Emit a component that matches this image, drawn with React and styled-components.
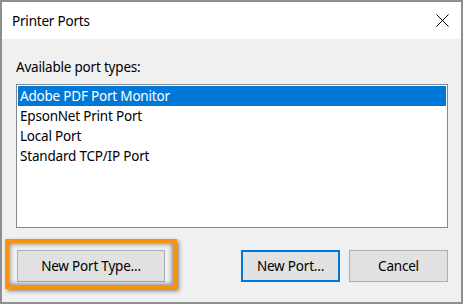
import React from 'react';
import styled, { createGlobalStyle } from 'styled-components';

const GlobalStyle = createGlobalStyle`
    html, body {
        margin: 0;
        padding: 0;
        background: #ffffff;
    }
    * {
        box-sizing: border-box;
    }
`;

const Window = styled.div`
    width: 463px;
    height: 304px;
    border: 2px solid #8e8e8e;
    display: flex;
    flex-direction: column;
    font-family: "Noto Sans", "Open Sans", sans-serif;
    font-size: 13.5px;
    letter-spacing: -0.2px;
    color: #000;
    background: #f0f0f0;
    overflow: hidden;
`;

const TitleBar = styled.div`
    height: 37px;
    flex: none;
    background: #ffffff;
    display: flex;
    align-items: center;
    justify-content: space-between;
    padding: 0 12px 0 10px;
`;

const Title = styled.span`
    line-height: 20px;
`;

const CloseButton = styled.button`
    width: 14px;
    height: 14px;
    padding: 0;
    border: none;
    background: transparent;
    display: flex;
    align-items: center;
    justify-content: center;
`;

const Body = styled.div`
    flex: 1;
    display: flex;
    flex-direction: column;
    padding: 18px 13px 0 14px;
`;

const Label = styled.div`
    line-height: 20px;
    margin-bottom: 7px;
`;

const ListBox = styled.div`
    height: 144px;
    flex: none;
    background: #ffffff;
    border: 1px solid #828790;
    padding: 1px;
`;

const ListItem = styled.div`
    height: 20px;
    line-height: 20px;
    padding-left: 2px;
    background: ${p => (p.$selected ? '#0078d7' : 'transparent')};
    color: ${p => (p.$selected ? '#ffffff' : '#000000')};
    white-space: nowrap;
`;

const ButtonRow = styled.div`
    display: flex;
    align-items: center;
    margin-top: 22px;
    gap: 9px;
`;

const Highlight = styled.div`
    position: relative;
    margin-left: 1px;
    margin-right: auto;

    &::after {
        content: '';
        position: absolute;
        top: -11px;
        left: -12px;
        right: -12px;
        bottom: -7px;
        border: 4px solid #f7930f;
        box-shadow: inset 0 0 4px 1px rgba(0, 0, 0, 0.45), 2px 2px 4px rgba(0, 0, 0, 0.45);
        pointer-events: none;
    }
`;

const Button = styled.button`
    height: 32px;
    width: ${p => p.$width || 99}px;
    font-family: inherit;
    font-size: inherit;
    letter-spacing: inherit;
    color: #000;
    background: #e1e1e1;
    border: ${p => (p.$default ? '2px solid #0078d7' : '1px solid #adadad')};
    padding: 0;
`;

const ports = [
    'Adobe PDF Port Monitor',
    'EpsonNet Print Port',
    'Local Port',
    'Standard TCP/IP Port',
];

export default function App() {
    return (
        <>
            <GlobalStyle />
            <Window>
                <TitleBar>
                    <Title>Printer Ports</Title>
                    <CloseButton aria-label="Close">
                        <svg width="13" height="13" viewBox="0 0 13 13">
                            <path d="M0.5 0.5 L12.5 12.5 M12.5 0.5 L0.5 12.5" stroke="#000" strokeWidth="1" fill="none" />
                        </svg>
                    </CloseButton>
                </TitleBar>
                <Body>
                    <Label>Available port types:</Label>
                    <ListBox>
                        {ports.map((name, i) => (
                            <ListItem key={name} $selected={i === 0}>{name}</ListItem>
                        ))}
                    </ListBox>
                    <ButtonRow>
                        <Highlight>
                            <Button $width={148}>New Port Type...</Button>
                        </Highlight>
                        <Button $default>New Port...</Button>
                        <Button>Cancel</Button>
                    </ButtonRow>
                </Body>
            </Window>
        </>
    );
}
